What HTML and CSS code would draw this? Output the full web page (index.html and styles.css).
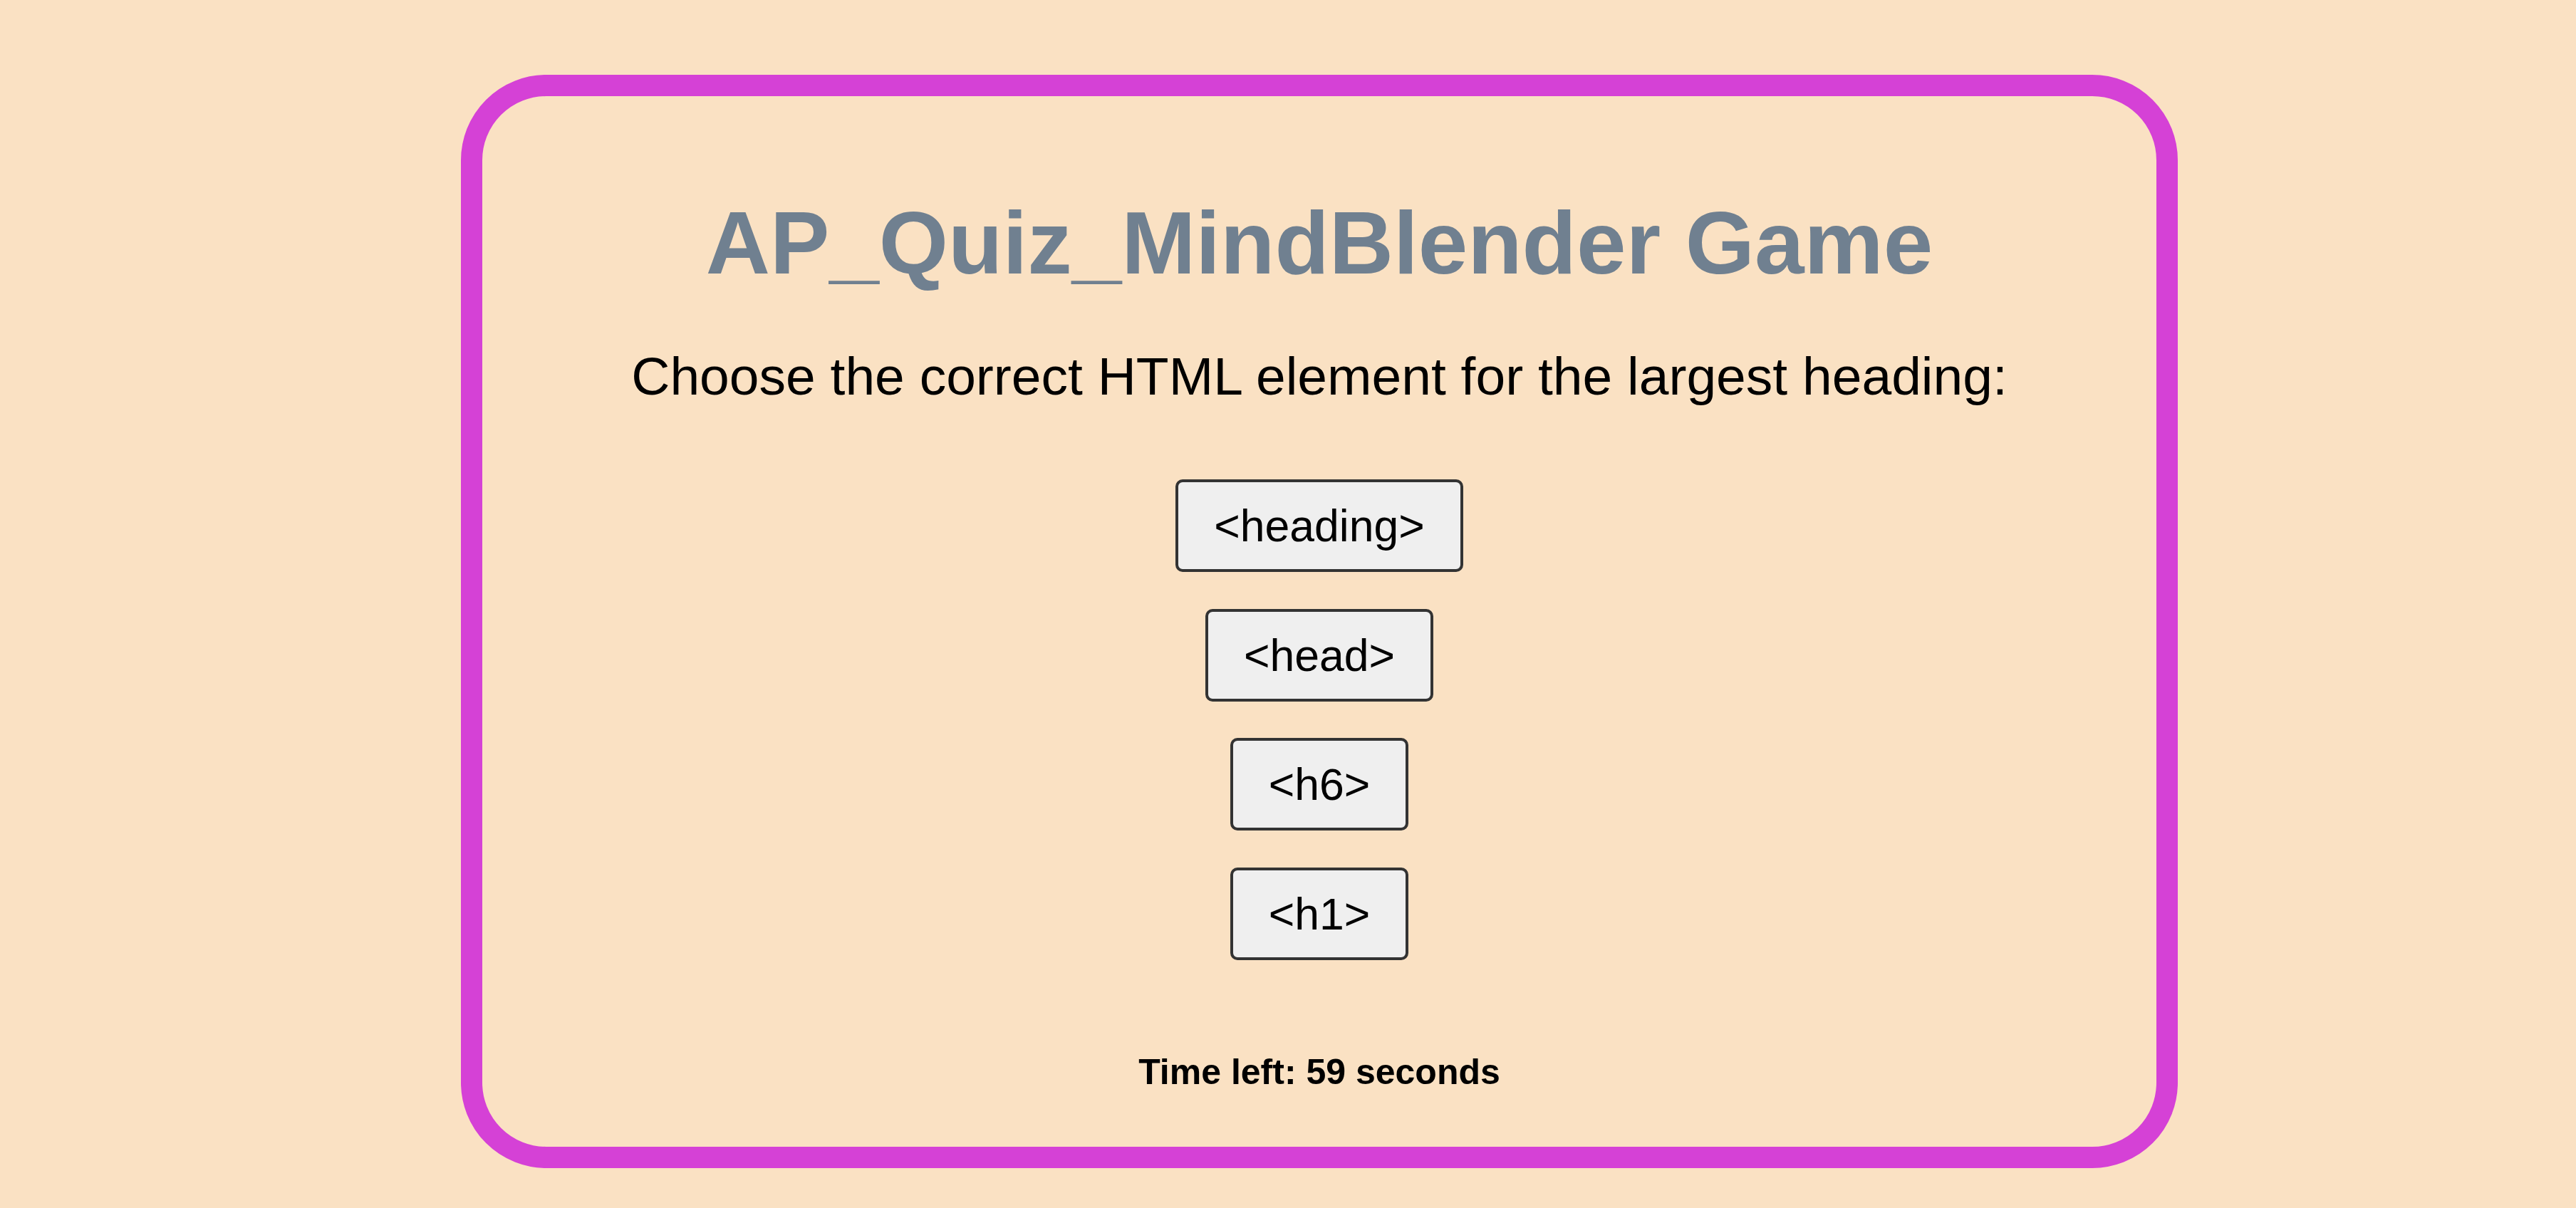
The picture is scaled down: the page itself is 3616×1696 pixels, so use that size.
FILE: index.html
```html
<!DOCTYPE html>
<html lang="en">
<head>
<meta charset="utf-8">
<title>AP_Quiz_MindBlender Game</title>
<link rel="stylesheet" href="styles.css">
</head>
<body>
<div class="page">
  <main class="card">
    <h1 class="title">AP_Quiz_MindBlender Game</h1>
    <p class="question">Choose the correct HTML element for the largest heading:</p>
    <div class="options">
      <button class="option">&lt;heading&gt;</button>
      <button class="option">&lt;head&gt;</button>
      <button class="option">&lt;h6&gt;</button>
      <button class="option">&lt;h1&gt;</button>
    </div>
    <p class="timer">Time left: 59 seconds</p>
  </main>
</div>
</body>
</html>
```
FILE: styles.css
```css
html, body {
  margin: 0;
  padding: 0;
}
body {
  background: #fae1c3;
  font-family: "Liberation Sans", Arial, sans-serif;
  color: #000;
}
.page {
  padding: 105px 0 0 647px;
}
.card {
  box-sizing: border-box;
  width: 2410px;
  height: 1535px;
  border: 30px solid #d541d6;
  border-radius: 120px;
  padding-top: 134px;
  display: flex;
  flex-direction: column;
  align-items: center;
}
.title {
  margin: 0 0 73px;
  font-size: 125px;
  font-weight: bold;
  color: #708090;
  line-height: normal;
}
.question {
  margin: 0 0 102px;
  font-size: 75px;
  line-height: normal;
}
.options {
  display: flex;
  flex-direction: column;
  align-items: center;
  gap: 51.5px;
}
.option {
  font-family: "Liberation Sans", Arial, sans-serif;
  font-size: 62.5px;
  line-height: normal;
  color: #000;
  background: #efefef;
  border: 4px solid #333;
  border-radius: 10px;
  padding: 25px 50px;
  margin: 0;
}
.timer {
  margin: 128px 0 0;
  font-size: 50px;
  font-weight: bold;
  line-height: normal;
}
```
